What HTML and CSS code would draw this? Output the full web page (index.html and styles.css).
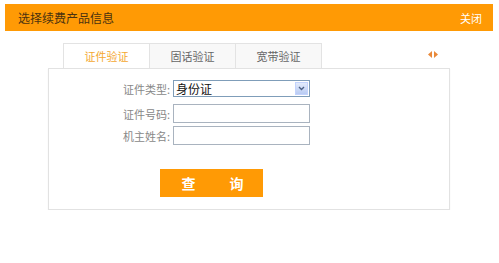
FILE: index.html
```html
<!DOCTYPE html>
<html lang="zh-CN">
<head>
<meta charset="utf-8">
<title>选择续费产品信息</title>
<link rel="stylesheet" href="styles.css">
</head>
<body>
<div class="header">
  <span class="header-title">选择续费产品信息</span>
  <span class="header-close">关闭</span>
</div>
<div class="main">
  <div class="tabbar">
    <div class="tab tab-active">证件验证</div>
    <div class="tab">固话验证</div>
    <div class="tab">宽带验证</div>
    <div class="arrows">
      <svg width="10" height="7" viewBox="0 0 10 7"><polygon points="4,0 4,7 0,3.5" fill="#e9893a"/><polygon points="6,0 6,7 10,3.5" fill="#e9893a"/></svg>
    </div>
  </div>
  <div class="panel">
    <div class="form">
      <div class="row row1">
        <span class="label">证件类型:</span>
        <div class="select">
          <span class="select-text">身份证</span>
          <span class="select-btn">
            <svg width="7" height="5" viewBox="0 0 7 5"><polyline points="1,1 3.5,3.5 6,1" fill="none" stroke="#4d6185" stroke-width="1.4"/></svg>
          </span>
        </div>
      </div>
      <div class="row row2">
        <span class="label">证件号码:</span>
        <div class="input"></div>
      </div>
      <div class="row row3">
        <span class="label">机主姓名:</span>
        <div class="input"></div>
      </div>
    </div>
    <div class="btn-wrap">
      <div class="btn"><span>查</span><span>询</span></div>
    </div>
  </div>
</div>
</body>
</html>
```

FILE: styles.css
```css
html, body {
  margin: 0;
  padding: 0;
  background: #fff;
}
body {
  font-family: "Noto Sans CJK SC", "Liberation Sans", sans-serif;
}
.header {
  margin: 4px 6px 0 5px;
  height: 27px;
  background: #ff9a05;
  display: flex;
  align-items: center;
  justify-content: space-between;
  padding: 0 11px 0 13px;
}
.header-title {
  font-size: 12px;
  color: #4a3210;
}
.header-close {
  font-size: 11px;
  color: #fff;
}
.main {
  margin: 12px 0 0 48px;
  width: 402px;
}
.tabbar {
  display: flex;
  align-items: stretch;
  padding-left: 15px;
  height: 25px;
}
.tab {
  width: 85px;
  height: 24px;
  border: 1px solid #e3e3e3;
  border-bottom: none;
  margin-right: -1px;
  background: #f8f8f8;
  font-size: 11px;
  color: #666;
  display: flex;
  align-items: center;
  justify-content: center;
}
.tab-active {
  background: #fff;
  color: #f4a831;
}
.arrows {
  margin-left: auto;
  padding-right: 12px;
  display: flex;
  align-items: center;
  padding-bottom: 2px;
}
.panel {
  border: 1px solid #e2e2e2;
  box-shadow: 0 1px 1px #eee;
  height: 140px;
}
.form {
  padding: 11px 0 0 23px;
}
.row {
  display: flex;
  align-items: center;
}
.row2 { margin-top: 7px; }
.row3 { margin-top: 3px; }
.label {
  width: 98px;
  text-align: right;
  font-size: 11px;
  color: #888;
  padding-right: 3px;
}
.select {
  width: 133px;
  height: 15px;
  border: 1px solid #7f9db9;
  display: flex;
  align-items: center;
  justify-content: space-between;
  padding-left: 2px;
}
.select-text {
  font-size: 12px;
  color: #111;
}
.select-btn {
  width: 13px;
  height: 13px;
  margin-right: 1px;
  background: linear-gradient(#e3ebfb, #b9cbf3);
  border: 1px solid #c3d3fd;
  box-sizing: border-box;
  display: flex;
  align-items: center;
  justify-content: center;
}
.input {
  width: 135px;
  height: 17px;
  border: 1px solid #a9b3bf;
}
.btn-wrap {
  margin: 24px 0 0 111px;
}
.btn {
  width: 103px;
  height: 28px;
  background: #ff9a05;
  display: flex;
  align-items: center;
  justify-content: center;
  gap: 34px;
  padding-left: 2px;
  box-sizing: border-box;
  color: #fff;
  font-weight: bold;
  font-size: 14px;
}
```
